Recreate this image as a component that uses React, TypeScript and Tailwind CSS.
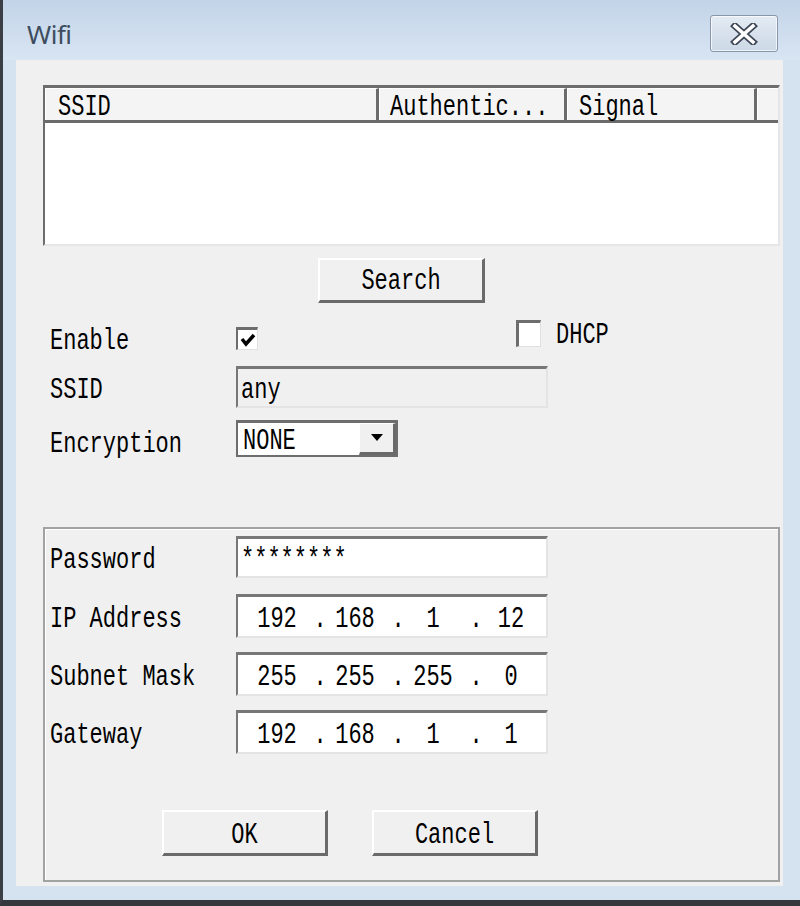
import React from "react";

const mono = "font-['Liberation_Mono',monospace] text-[22px] leading-[24px] text-black";

function T({ children, className = "" }: { children: React.ReactNode; className?: string }) {
  return <span className={`inline-block scale-y-[1.3] translate-y-[3px] whitespace-pre ${mono} ${className}`}>{children}</span>;
}

function Raised({ label, className = "" }: { label: string; className?: string }) {
  return (
    <div
      className={`flex items-center justify-center bg-[#f0f0f0] border-t-2 border-l-2 border-t-white border-l-white border-b-[3px] border-r-[3px] border-b-[#6a6a6a] border-r-[#6a6a6a] ${className}`}
    >
      <T>{label}</T>
    </div>
  );
}

function Sunken({ children, className = "" }: { children?: React.ReactNode; className?: string }) {
  return (
    <div
      className={`flex items-center border-t-[3px] border-l-2 border-t-[#777777] border-l-[#777777] border-b-2 border-r-2 border-b-[#e4e4e4] border-r-[#e4e4e4] ${className}`}
    >
      {children}
    </div>
  );
}

function IP({ parts }: { parts: string[] }) {
  return (
    <Sunken className="w-[312px] h-[44px] bg-white pl-[14px]">
      {parts.map((p, i) => (
        <React.Fragment key={i}>
          <span className="w-[50px] text-center inline-block">
            <T>{p}</T>
          </span>
          {i < 3 && (
            <span className="w-[28px] pl-[8px] text-center inline-block">
              <T>.</T>
            </span>
          )}
        </React.Fragment>
      ))}
    </Sunken>
  );
}

function Label({ children }: { children: string }) {
  return (
    <div className="w-[186px] shrink-0">
      <T>{children}</T>
    </div>
  );
}

export default function App() {
  return (
    <div className="w-[800px] h-[906px] bg-[#d5e3f1] flex flex-col border-l-[3px] border-l-[#3b3f45] border-b-[6px] border-b-[#34383d]">
      {/* title bar */}
      <div className="h-[60px] shrink-0 flex items-start justify-between bg-gradient-to-b from-[#c3d4e8] to-[#d8e5f3]">
        <div className="pl-[24px] pt-[17px] font-['Noto_Sans',sans-serif] text-[26px] leading-[34px] text-[#3e4d5e] tracking-[-0.5px]">
          Wifi
        </div>
        <div className="mt-[15px] mr-[22px] w-[68px] h-[37px] rounded-[3px] border border-[#8796a8] bg-gradient-to-b from-[#e4ebf3] to-[#ccd8e6] flex items-center justify-center shadow-[inset_0_0_0_1px_rgba(255,255,255,0.7)]">
          <svg width="28" height="22" viewBox="0 0 28 22">
            <path d="M5 3 L23 19 M23 3 L5 19" stroke="#3d4654" strokeWidth="7" strokeLinecap="square" />
            <path d="M5 3 L23 19 M23 3 L5 19" stroke="#ffffff" strokeWidth="3.5" strokeLinecap="square" />
          </svg>
        </div>
      </div>

      <div className="flex flex-1">
        {/* client area */}
        <div className="ml-[13px] w-[767px] h-[826px] bg-[#f0f0f0] flex flex-col">
          {/* list view */}
          <div className="mt-[25px] ml-[27px] w-[737px] h-[161px] bg-white border-t-[3px] border-l-2 border-t-[#6d6d6d] border-l-[#6d6d6d] border-r-2 border-b-2 border-r-[#e6e6e6] border-b-[#e6e6e6] flex flex-col">
            <div className="h-[35px] flex border-b-[3px] border-b-[#6b6b6b] bg-[#f4f4f4]">
              <div className="w-[334px] pl-[12px] flex items-center border-r-[3px] border-r-[#6b6b6b] border-t border-l border-t-white border-l-white">
                <T>SSID</T>
              </div>
              <div className="w-[188px] pl-[10px] flex items-center border-r-[3px] border-r-[#6b6b6b] border-t border-l border-t-white border-l-white">
                <T>Authentic...</T>
              </div>
              <div className="w-[190px] pl-[11px] flex items-center border-r-[3px] border-r-[#6b6b6b] border-t border-l border-t-white border-l-white">
                <T>Signal</T>
              </div>
              <div className="flex-1 border-t border-l border-t-white border-l-white" />
            </div>
            <div className="flex-1" />
          </div>

          {/* search */}
          <Raised label="Search" className="mt-[12px] ml-[302px] w-[167px] h-[45px]" />

          {/* enable row */}
          <div className="mt-[17px] ml-[34px] h-[30px] flex items-start">
            <div className="mt-[7px]">
              <Label>Enable</Label>
            </div>
            <div className="mt-[7px] w-[22px] h-[23px] bg-white border-t-[3px] border-l-2 border-t-[#6d6d6d] border-l-[#6d6d6d] border-r border-b border-r-[#e0e0e0] border-b-[#e0e0e0] flex items-center justify-center">
              <svg width="16" height="14" viewBox="0 0 16 14">
                <path d="M2 6 L6 11 L14 2" stroke="#000" strokeWidth="3.5" fill="none" />
              </svg>
            </div>
            <div className="ml-[258px] w-[25px] h-[27px] bg-white border-t-[3px] border-l-[3px] border-t-[#6d6d6d] border-l-[#6d6d6d] border-r border-b border-r-[#e0e0e0] border-b-[#e0e0e0]" />
            <div className="ml-[15px] mt-[1px]">
              <T>DHCP</T>
            </div>
          </div>

          {/* ssid row */}
          <div className="mt-[16px] ml-[34px] flex items-center">
            <Label>SSID</Label>
            <Sunken className="w-[312px] h-[42px] bg-[#f0f0f0] pl-[3px]">
              <T>any</T>
            </Sunken>
          </div>

          {/* encryption row */}
          <div className="mt-[12px] ml-[34px] flex items-center">
            <div className="mt-[6px]">
              <Label>Encryption</Label>
            </div>
            <div className="w-[162px] h-[37px] bg-white flex border-2 border-[#6d6d6d] border-t-[3px]">
              <div className="flex-1 flex items-center pl-[5px]">
                <T>NONE</T>
              </div>
              <div className="w-[37px] bg-[#f0f0f0] flex items-center justify-center border-t border-l border-t-white border-l-white border-b-[3px] border-r-[3px] border-b-[#6a6a6a] border-r-[#6a6a6a]">
                <svg width="12" height="8" viewBox="0 0 12 8">
                  <path d="M0 0 H12 L6 7 Z" fill="#000" />
                </svg>
              </div>
            </div>
          </div>

          {/* group box */}
          <div className="mt-[70px] ml-[27px] w-[737px] h-[355px] border-2 border-[#a2a2a2] shadow-[inset_1px_1px_0_#ffffff] flex flex-col pl-[5px]">
            <div className="mt-[7px] flex items-center">
              <Label>Password</Label>
              <Sunken className="w-[312px] h-[42px] bg-white pl-[3px]">
                <T>********</T>
              </Sunken>
            </div>
            <div className="mt-[16px] flex items-center">
              <Label>IP Address</Label>
              <IP parts={["192", "168", "1", "12"]} />
            </div>
            <div className="mt-[14px] flex items-center">
              <Label>Subnet Mask</Label>
              <IP parts={["255", "255", "255", "0"]} />
            </div>
            <div className="mt-[14px] flex items-center">
              <Label>Gateway</Label>
              <IP parts={["192", "168", "1", "1"]} />
            </div>
            <div className="mt-[56px] ml-[112px] flex gap-[44px]">
              <Raised label="OK" className="w-[166px] h-[46px]" />
              <Raised label="Cancel" className="w-[166px] h-[46px]" />
            </div>
          </div>
        </div>
      </div>
      <div className="h-[14px] shrink-0" />
    </div>
  );
}
